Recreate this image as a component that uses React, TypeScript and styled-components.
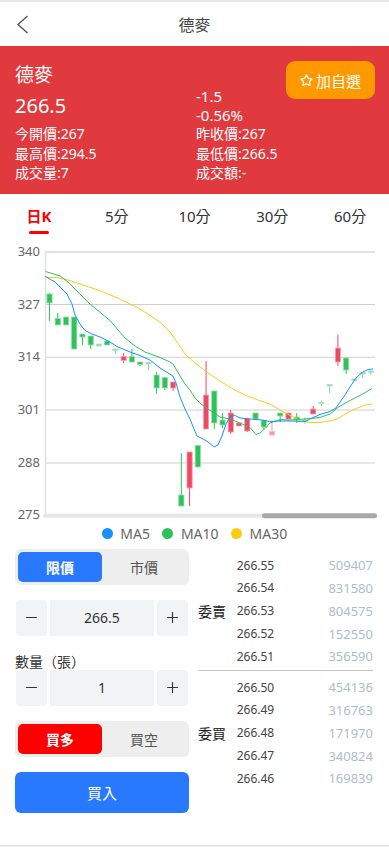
import React from 'react';
import styled, { createGlobalStyle } from 'styled-components';
import { Minus, Plus, Star } from 'lucide-react';

const GlobalStyle = createGlobalStyle`
  *, *::before, *::after { box-sizing: border-box; }
  body {
    margin: 0;
    background: #fff;
    font-family: "Noto Sans", "Noto Sans CJK TC", sans-serif;
  }
`;

const FONT = '"Noto Sans", "Noto Sans CJK TC", sans-serif';

// candles in chart pixel coords: body top/bottom, wick high/low
type Candle = { t: number; b: number; h: number; l: number; c: 'up' | 'down' | 'upLight' | 'downLight' };

const candles: Candle[] = [
  { t: 295, b: 304, h: 294, l: 322, c: 'down' },
  { t: 319.5, b: 326, h: 314, l: 326, c: 'down' },
  { t: 318, b: 326, h: 318, l: 326, c: 'down' },
  { t: 318, b: 350, h: 318, l: 350, c: 'down' },
  { t: 335, b: 338, h: 335, l: 346, c: 'down' },
  { t: 337, b: 346, h: 337, l: 350, c: 'down' },
  { t: 345, b: 347, h: 345, l: 347, c: 'downLight' },
  { t: 342, b: 346, h: 342, l: 346, c: 'down' },
  { t: 350, b: 351.5, h: 350, l: 355, c: 'downLight' },
  { t: 357.5, b: 361.5, h: 354, l: 364, c: 'up' },
  { t: 357.5, b: 363, h: 350, l: 363, c: 'down' },
  { t: 363, b: 365.5, h: 363, l: 367, c: 'down' },
  { t: 363.5, b: 365, h: 363.5, l: 371, c: 'downLight' },
  { t: 376, b: 389, h: 373, l: 395, c: 'down' },
  { t: 378.5, b: 389, h: 378.5, l: 391, c: 'down' },
  { t: 383, b: 389, h: 383, l: 392, c: 'up' },
  { t: 496, b: 507, h: 454, l: 507, c: 'down' },
  { t: 453, b: 489, h: 453, l: 507, c: 'up' },
  { t: 446.5, b: 468, h: 446, l: 468, c: 'down' },
  { t: 396, b: 430, h: 362, l: 430, c: 'up' },
  { t: 392, b: 424, h: 392, l: 430, c: 'down' },
  { t: 421, b: 426, h: 414, l: 429, c: 'down' },
  { t: 414, b: 433, h: 411, l: 435, c: 'up' },
  { t: 424, b: 427, h: 424, l: 427, c: 'up' },
  { t: 419.5, b: 432, h: 419, l: 433, c: 'up' },
  { t: 414, b: 420, h: 414, l: 420, c: 'down' },
  { t: 421.5, b: 428, h: 421, l: 430, c: 'down' },
  { t: 432.5, b: 436, h: 424, l: 437, c: 'upLight' },
  { t: 414, b: 417, h: 414, l: 423, c: 'down' },
  { t: 414, b: 420, h: 414, l: 420, c: 'up' },
  { t: 418, b: 421, h: 414, l: 424, c: 'down' },
  { t: 421, b: 423, h: 418, l: 425, c: 'downLight' },
  { t: 410, b: 415, h: 407, l: 415, c: 'up' },
  { t: 403.5, b: 404.5, h: 401.5, l: 407, c: 'downLight' },
  { t: 385.5, b: 387, h: 385.5, l: 394, c: 'downLight' },
  { t: 349, b: 363, h: 335.5, l: 367, c: 'up' },
  { t: 359, b: 371, h: 359, l: 375, c: 'down' },
  { t: 380, b: 381.5, h: 380, l: 382, c: 'downLight' },
  { t: 373.5, b: 375, h: 373.5, l: 379, c: 'downLight' },
  { t: 372, b: 373.5, h: 372, l: 376, c: 'downLight' },
];

const candleColors = {
  up: { fill: '#ef4864', stroke: '#f5a3b2' },
  down: { fill: '#2fc25b', stroke: '#93dcaa' },
  upLight: { fill: '#f59aab', stroke: '#f8bcc7' },
  downLight: { fill: '#86d7a0', stroke: '#b2e6c2' },
};

const ma5 = '45.5,277.5 55,283 67,295 72,305 75,316 80,325 85,331.5 92,335 100,338 110,343 117,347.5 130,353 140,356.5 150,361 160,369 168,374 173,377 176,384 180,398 185,410 190,420 194,430 197,437 203,440 208,443 214,448 218,446 222,437 226,425 230,418 234,416 240,419 250,420 262,421 270,422.5 280,422 290,422 305,422.5 312,419 320,415.5 330,412.5 336,409 340,403 345,396 350,388 356,379 362,373.5 368,370.5 373,370';
const ma10 = '45.5,272.5 52,274.5 60,277 68,283 75,290 90,305 110,321.5 125,339 135,347 145,353 160,358.5 170,363 173,365 176,370 180,377 185,385 190,391 195,399 200,404 206,409 212,412.5 220,418 230,420 240,424 250,428.5 256,435.5 260,434 265,429.5 270,424 280,420.5 290,421 305,420 320,418.5 330,415 340,407 350,401.5 360,396.5 372,389.5';
const ma30 = '45.5,278.3 55,278.5 65,280 80,285 100,291.7 120,300 140,310 160,323 170,333 175,340 185,355 195,364 206.7,373 220,382 233,390 245,396 260,401.7 270,405 280,411 290,416.5 300,421.5 310,423.5 320,423.5 330,422 337,420 345,415 355,410 365,406 372,405';

const grid = [
  { y: 305.5, label: '327' },
  { y: 358.3, label: '314' },
  { y: 411, label: '301' },
  { y: 464, label: '288' },
];

const asks = [
  ['266.55', '509407'],
  ['266.54', '831580'],
  ['266.53', '804575'],
  ['266.52', '152550'],
  ['266.51', '356590'],
];
const bids = [
  ['266.50', '454136'],
  ['266.49', '316763'],
  ['266.48', '171970'],
  ['266.47', '340824'],
  ['266.46', '169839'],
];

const tabs = ['日K', '5分', '10分', '30分', '60分'];

export default function App() {
  return (
    <Page>
      <GlobalStyle />
      <Header>
        <BackIcon viewBox="0 0 14 20">
          <polyline points="11.5,2 2,10.5 11.5,19" />
        </BackIcon>
        <Title>德麥</Title>
        <span />
      </Header>

      <Quote>
        <QuoteTop>
          <div>
            <Name>德麥</Name>
            <BigPrice>266.5</BigPrice>
          </div>
          <Change>
            <span>-1.5</span>
            <span>-0.56%</span>
          </Change>
          <WatchButton type="button">
            <Star size={13} strokeWidth={2.4} />
            加自選
          </WatchButton>
        </QuoteTop>
        <Stats>
          <span>今開價:267</span>
          <span>昨收價:267</span>
          <span>最高價:294.5</span>
          <span>最低價:266.5</span>
          <span>成交量:7</span>
          <span>成交額:-</span>
        </Stats>
      </Quote>

      <Tabs>
        {tabs.map((t, i) => (
          <Tab key={t} $active={i === 0}>{t}</Tab>
        ))}
      </Tabs>

      <Chart viewBox="0 240 389 284" width={389} height={284}>
        <line x1={45} y1={253} x2={375} y2={253} stroke="#e2e2e2" strokeWidth={2} />
        {grid.map((g) => (
          <line key={g.label} x1={45} y1={g.y} x2={375} y2={g.y} stroke="#cfcfcf" strokeWidth={1} />
        ))}
        <line x1={45.5} y1={253} x2={45.5} y2={516} stroke="#e0e0e0" strokeWidth={1.5} />
        <AxisText x={40} y={257}>340</AxisText>
        {grid.map((g) => (
          <AxisText key={g.label} x={40} y={g.y + 4}>{g.label}</AxisText>
        ))}
        <AxisText x={40} y={520}>275</AxisText>

        {candles.map((k, i) => {
          const cx = 49.5 + i * 8.24;
          const col = candleColors[k.c];
          return (
            <g key={i}>
              <line x1={cx} y1={k.h} x2={cx} y2={k.l} stroke={col.fill} strokeWidth={1} />
              <rect x={cx - 2.6} y={k.t} width={5.2} height={Math.max(k.b - k.t, 1)} fill={col.fill} stroke={col.stroke} strokeWidth={0.8} />
            </g>
          );
        })}

        <polyline points={ma30} fill="none" stroke="#facc14" strokeWidth={1} />
        <polyline points={ma10} fill="none" stroke="#2fc25b" strokeWidth={1} />
        <polyline points={ma5} fill="none" stroke="#1890ff" strokeWidth={1} />

        <rect x={43} y={514.8} width={334} height={4} rx={2} fill="#e6e6e6" />
        <rect x={262} y={514.3} width={115} height={5} rx={2.5} fill="#a9a9a9" />
      </Chart>

      <Legend>
        <LegendItem><Dot $color="#1890ff" />MA5</LegendItem>
        <LegendItem><Dot $color="#2fc25b" />MA10</LegendItem>
        <LegendItem><Dot $color="#facc14" />MA30</LegendItem>
      </Legend>

      <Trade>
        <OrderForm>
          <Segmented>
            <Segment $active $color="#2979ff">限價</Segment>
            <Segment>市價</Segment>
          </Segmented>
          <Stepper>
            <StepButton type="button"><Minus size={17} strokeWidth={1.6} /></StepButton>
            <StepValue>266.5</StepValue>
            <StepButton type="button"><Plus size={17} strokeWidth={1.6} /></StepButton>
          </Stepper>
          <FieldLabel>數量（張）</FieldLabel>
          <Stepper $tight>
            <StepButton type="button"><Minus size={17} strokeWidth={1.6} /></StepButton>
            <StepValue>1</StepValue>
            <StepButton type="button"><Plus size={17} strokeWidth={1.6} /></StepButton>
          </Stepper>
          <Segmented>
            <Segment $active $color="#ff0000">買多</Segment>
            <Segment>買空</Segment>
          </Segmented>
          <SubmitButton type="button">買入</SubmitButton>
        </OrderForm>

        <Book>
          <BookGroup>
            <BookLabel>委賣</BookLabel>
            <BookRows>
              {asks.map(([p, v]) => (
                <BookRow key={p}><BookPrice>{p}</BookPrice><BookVol>{v}</BookVol></BookRow>
              ))}
            </BookRows>
          </BookGroup>
          <Divider />
          <BookGroup>
            <BookLabel>委買</BookLabel>
            <BookRows>
              {bids.map(([p, v]) => (
                <BookRow key={p}><BookPrice>{p}</BookPrice><BookVol>{v}</BookVol></BookRow>
              ))}
            </BookRows>
          </BookGroup>
        </Book>
      </Trade>
    </Page>
  );
}

const Page = styled.div`
  width: 389px;
  height: 847px;
  background: #fff;
  border-bottom: 2px solid #e8e8e8;
  overflow: hidden;
`;

const Header = styled.header`
  height: 46px;
  border-top: 2px solid #e8e8e8;
  display: grid;
  grid-template-columns: 60px 1fr 60px;
  align-items: center;
`;

const BackIcon = styled.svg`
  width: 14px;
  height: 20px;
  margin-left: 16px;
  fill: none;
  stroke: #555;
  stroke-width: 1.4;
`;

const Title = styled.div`
  text-align: center;
  font-size: 16px;
  color: #444;
`;

const Quote = styled.section`
  background: #e0393e;
  color: #fff;
  padding: 17px 14px 11px 15px;
`;

const QuoteTop = styled.div`
  display: grid;
  grid-template-columns: 181px 1fr auto;
  align-items: start;
`;

const Name = styled.div`
  font-size: 19px;
  line-height: 24px;
`;

const BigPrice = styled.div`
  font-size: 20px;
  line-height: 26px;
  margin-top: 5.5px;
`;

const Change = styled.div`
  display: flex;
  flex-direction: column;
  padding-top: 24px;
  font-size: 15px;
  line-height: 19px;
`;

const WatchButton = styled.button`
  margin-top: -2px;
  width: 89px;
  height: 38px;
  border: none;
  border-radius: 9px;
  background: #ff9900;
  color: #fff;
  font-family: ${FONT};
  font-size: 15px;
  display: flex;
  align-items: center;
  justify-content: center;
  gap: 3px;
  padding: 0;
`;

const Stats = styled.div`
  display: grid;
  grid-template-columns: 181px 1fr;
  font-size: 14px;
  line-height: 19.5px;
  margin-top: -1px;
`;

const Tabs = styled.nav`
  display: flex;
  height: 45px;
`;

const Tab = styled.div<{ $active?: boolean }>`
  flex: 1;
  display: flex;
  flex-direction: column;
  align-items: center;
  padding-top: 11px;
  font-size: 15px;
  line-height: 22px;
  color: ${(p) => (p.$active ? '#ff0000' : '#333')};
  font-weight: ${(p) => (p.$active ? 700 : 400)};

  &::after {
    content: '';
    width: 20px;
    height: 3px;
    margin-top: 4px;
    border-radius: 2px;
    background: ${(p) => (p.$active ? '#ff0000' : 'transparent')};
  }
`;

const Chart = styled.svg`
  display: block;
`;

const AxisText = styled.text`
  font-family: ${FONT};
  font-size: 13px;
  fill: #666;
  text-anchor: end;
`;

const Legend = styled.div`
  height: 21px;
  display: flex;
  align-items: center;
  justify-content: center;
  gap: 12.5px;
  font-size: 14px;
  color: #666;
`;

const LegendItem = styled.div`
  display: flex;
  align-items: center;
  gap: 7.5px;
`;

const Dot = styled.span<{ $color: string }>`
  width: 11px;
  height: 11px;
  border-radius: 50%;
  background: ${(p) => p.$color};
`;

const Trade = styled.section`
  display: grid;
  grid-template-columns: 174px 1fr;
  column-gap: 9px;
  padding: 5px 14px 0 15px;
`;

const OrderForm = styled.div`
  display: flex;
  flex-direction: column;
`;

const Segmented = styled.div`
  height: 36px;
  padding: 3px;
  background: #eeeeee;
  border-radius: 6px;
  display: flex;
  margin-bottom: 15px;
`;

const Segment = styled.div<{ $active?: boolean; $color?: string }>`
  flex: 1;
  border-radius: 5px;
  display: flex;
  align-items: center;
  justify-content: center;
  font-size: 14px;
  background: ${(p) => (p.$active ? p.$color : 'transparent')};
  color: ${(p) => (p.$active ? '#fff' : '#555')};
  font-weight: ${(p) => (p.$active ? 700 : 400)};
`;

const Stepper = styled.div<{ $tight?: boolean }>`
  height: 36px;
  margin: 0 1px ${(p) => (p.$tight ? '15px' : '0')} 1px;
  display: flex;
  gap: 3px;
`;

const StepButton = styled.button`
  width: 31px;
  border: none;
  border-radius: 4px;
  background: #f2f3f5;
  color: #333;
  display: flex;
  align-items: center;
  justify-content: center;
  padding: 0;
`;

const StepValue = styled.div`
  flex: 1;
  background: #f2f3f5;
  display: flex;
  align-items: center;
  justify-content: center;
  font-size: 14px;
  color: #333;
`;

const FieldLabel = styled.div`
  margin-top: 17px;
  font-size: 14px;
  line-height: 17px;
  color: #333;
`;

const SubmitButton = styled.button`
  height: 41px;
  border: none;
  border-radius: 6px;
  background: #2979ff;
  color: #fff;
  font-family: ${FONT};
  font-size: 15px;
`;

const Book = styled.div`
  padding-top: 5.3px;
  padding-right: 2px;
`;

const BookGroup = styled.div`
  display: flex;
  align-items: center;
`;

const BookLabel = styled.div`
  width: 29px;
  font-size: 14px;
  color: #222;
`;

const BookRows = styled.div`
  flex: 1;
  margin-left: 9.7px;
  display: flex;
  flex-direction: column;
`;

const BookRow = styled.div`
  height: 22.8px;
  display: flex;
  align-items: center;
  justify-content: space-between;
`;

const BookPrice = styled.span`
  font-size: 12px;
  color: #444;
`;

const BookVol = styled.span`
  font-size: 13px;
  color: #b3bbca;
`;

const Divider = styled.div`
  height: 1px;
  background: #c4c4c4;
  margin: 2px 0 5px;
`;
